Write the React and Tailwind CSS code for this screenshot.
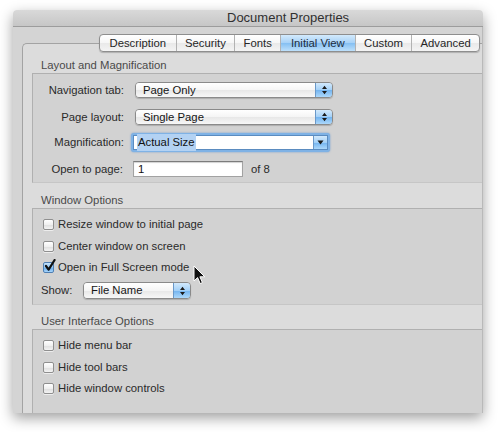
import React from "react";

const tabs = [
  { label: "Description", w: "w-[76px]" },
  { label: "Security", w: "w-[59px]" },
  { label: "Fonts", w: "w-[46px]" },
  { label: "Initial View", w: "w-[75px]", active: true },
  { label: "Custom", w: "w-[57px]" },
  { label: "Advanced", w: "w-[68px]" },
];

function UpDown() {
  return (
    <svg width="7" height="10" viewBox="0 0 7 10">
      <path d="M3.5 0.8 L6 3.9 H1 Z M3.5 9.2 L6 6.1 H1 Z" fill="#1b1b1b" />
    </svg>
  );
}

function Popup({ width, height = "h-[16px]", children }) {
  return (
    <div className={`flex ${height} ${width} rounded-[4px] border border-[#8a8a8a] overflow-hidden shadow-[0_1px_1px_rgba(0,0,0,0.18)]`}>
      <div className="flex-1 flex items-center pl-[7px] bg-[linear-gradient(to_bottom,#ffffff,#f5f5f5_50%,#e7e7e7_51%,#f7f7f7)] text-[#151515]">
        {children}
      </div>
      <div className="w-[17px] flex items-center justify-center border-l border-[#6a98c8] bg-[linear-gradient(to_bottom,#d2e9fc,#a3d0f7_50%,#72b3ef_51%,#acd8fb)]">
        <UpDown />
      </div>
    </div>
  );
}

function Checkbox({ checked, children }) {
  return (
    <div className="flex items-center h-[14px] pl-[10px] gap-[4px]">
      <div className="relative">
        {checked ? (
          <div className="w-[11px] h-[11px] rounded-[2px] border border-[#4f7fb3] bg-[linear-gradient(to_bottom,#c6e3fc,#8fc6f4_50%,#67acee_51%,#a6d4fa)]" />
        ) : (
          <div className="w-[11px] h-[11px] rounded-[2px] border border-[#8f8f8f] bg-[linear-gradient(to_bottom,#ffffff,#f0f0f0_50%,#dedede_51%,#f3f3f3)] shadow-[0_1px_0_rgba(255,255,255,0.6)]" />
        )}
        {checked && (
          <svg className="absolute left-[1px] top-[-3px]" width="12" height="13" viewBox="0 0 12 13">
            <path d="M2 7 L4.6 10.6 L10.6 1" fill="none" stroke="#111" strokeWidth="2.2" strokeLinecap="round" strokeLinejoin="round" />
          </svg>
        )}
      </div>
      <span>{children}</span>
    </div>
  );
}

function SectionLabel({ children, h }) {
  return (
    <div className={`${h} flex items-end pb-[1px] pl-[18px] leading-[14px] text-[#4a4a4a]`}>{children}</div>
  );
}

export default function App() {
  return (
    <div className="w-[500px] h-[432px] bg-white overflow-hidden pt-[10px] pl-[13px] font-['Liberation_Sans',Arial,sans-serif] text-[11.3px] text-[#2a2a2a] relative">
      <div className="w-[470px] h-[403px] flex flex-col shadow-[0_5px_14px_rgba(0,0,0,0.38)] rounded-t-[4px] overflow-hidden">
        {/* title bar */}
        <div className="h-[17px] shrink-0 flex items-center pl-[214px] text-[13px] text-[#303030] bg-[linear-gradient(to_bottom,#d9d9d9,#c6c6c6)] border-b border-[#9c9c9c]">
          Document Properties
        </div>

        <div className="flex-1 flex flex-col bg-[#d4d4d4] pt-[7px] border-r border-[#b9b9b9]">
          {/* tabs */}
          <div className="relative z-10 ml-[86px] flex h-[18px] w-[381px] rounded-[4px] border border-[#8e8e8e] overflow-hidden bg-[linear-gradient(to_bottom,#ffffff,#f6f6f6_50%,#e9e9e9_51%,#f4f4f4)] shadow-[0_1px_1px_rgba(0,0,0,0.2)]">
            {tabs.map((t, i) => (
              <div
                key={t.label}
                className={`${t.w} flex items-center justify-center ${i > 0 ? "border-l border-[#b2b2b2]" : ""} ${t.active ? "bg-[linear-gradient(to_bottom,#d3eafc,#a6d1f7_50%,#84bff2_51%,#bde0fb)] text-[#1c2c3c]" : "text-[#262626]"}`}
              >
                {t.label}
              </div>
            ))}
          </div>

          {/* tab panel */}
          <div className="-mt-[9px] ml-[9px] flex-1 flex flex-col border-l border-t border-[#a3a3a3] rounded-tl-[5px] bg-[#dcdcdc] pt-[8px]">
            <SectionLabel h="h-[21px]">Layout and Magnification</SectionLabel>
            <div className="ml-[9px] h-[110px] border-l border-t border-b border-[#b0b0b0] border-b-[#c6c6c6] bg-[#d2d2d2] flex flex-col">
              <div className="flex items-center h-[16px] mt-[8px]">
                <div className="w-[91px] text-right">Navigation tab:</div>
                <div className="ml-[11px]">
                  <Popup width="w-[198px]">Page Only</Popup>
                </div>
              </div>
              <div className="flex items-center h-[16px] mt-[11px]">
                <div className="w-[91px] text-right">Page layout:</div>
                <div className="ml-[11px]">
                  <Popup width="w-[198px]">Single Page</Popup>
                </div>
              </div>
              <div className="flex items-center h-[19px] mt-[8px]">
                <div className="w-[91px] text-right">Magnification:</div>
                <div className="ml-[7px] w-[199px] h-[19px] rounded-[3px] p-[2px] bg-[#7fb2e5] shadow-[0_0_2px_rgba(60,130,210,0.7)]">
                  <div className="flex h-full border border-[#5b8cc0] bg-white">
                    <div className="flex-1 flex items-center pl-[3px]">
                      <span className="bg-[#b3d2f3] px-[1px] text-[#111]">Actual Size</span>
                    </div>
                    <div className="w-[14px] flex items-center justify-center border-l border-[#6a98c8] bg-[linear-gradient(to_bottom,#d2e9fc,#a3d0f7_50%,#72b3ef_51%,#acd8fb)]">
                      <svg width="7" height="5" viewBox="0 0 7 5">
                        <path d="M0.5 0.5 H6.5 L3.5 4.5 Z" fill="#1b1b1b" />
                      </svg>
                    </div>
                  </div>
                </div>
              </div>
              <div className="flex items-center h-[16px] mt-[9px]">
                <div className="w-[90px] text-right">Open to page:</div>
                <div className="ml-[10px] w-[110px] h-[16px] bg-white border border-[#a2a2a2] border-t-[#7c7c7c] shadow-[inset_0_1px_1px_rgba(0,0,0,0.18)] flex items-center pl-[4px] text-[#111]">
                  1
                </div>
                <span className="ml-[8px]">of 8</span>
              </div>
            </div>

            <SectionLabel h="h-[25px]">Window Options</SectionLabel>
            <div className="ml-[9px] h-[97px] border-l border-t border-b border-[#b0b0b0] border-b-[#c6c6c6] bg-[#d2d2d2] flex flex-col">
              <div className="mt-[8px]">
                <Checkbox>Resize window to initial page</Checkbox>
              </div>
              <div className="mt-[8px]">
                <Checkbox>Center window on screen</Checkbox>
              </div>
              <div className="mt-[7px]">
                <Checkbox checked>Open in Full Screen mode</Checkbox>
              </div>
              <div className="flex items-center h-[17px] mt-[8px] pl-[8px]">
                <span className="w-[42px]">Show:</span>
                <Popup width="w-[108px]" height="h-[17px]">File Name</Popup>
              </div>
            </div>

            <SectionLabel h="h-[24px]">User Interface Options</SectionLabel>
            <div className="ml-[9px] flex-1 border-l border-t border-[#b0b0b0] bg-[#d2d2d2] flex flex-col">
              <div className="mt-[8px]">
                <Checkbox>Hide menu bar</Checkbox>
              </div>
              <div className="mt-[8px]">
                <Checkbox>Hide tool bars</Checkbox>
              </div>
              <div className="mt-[7px]">
                <Checkbox>Hide window controls</Checkbox>
              </div>
            </div>
          </div>
        </div>
      </div>

      {/* mouse pointer */}
      <svg className="absolute left-[193px] top-[265px]" width="13" height="20" viewBox="0 0 13 20">
        <path d="M1 1 L1 16 L4.6 12.6 L7.2 18.6 L9.4 17.6 L6.9 11.8 L11.8 11.8 Z" fill="#111" stroke="#fff" strokeWidth="1" strokeLinejoin="round" />
      </svg>
    </div>
  );
}
